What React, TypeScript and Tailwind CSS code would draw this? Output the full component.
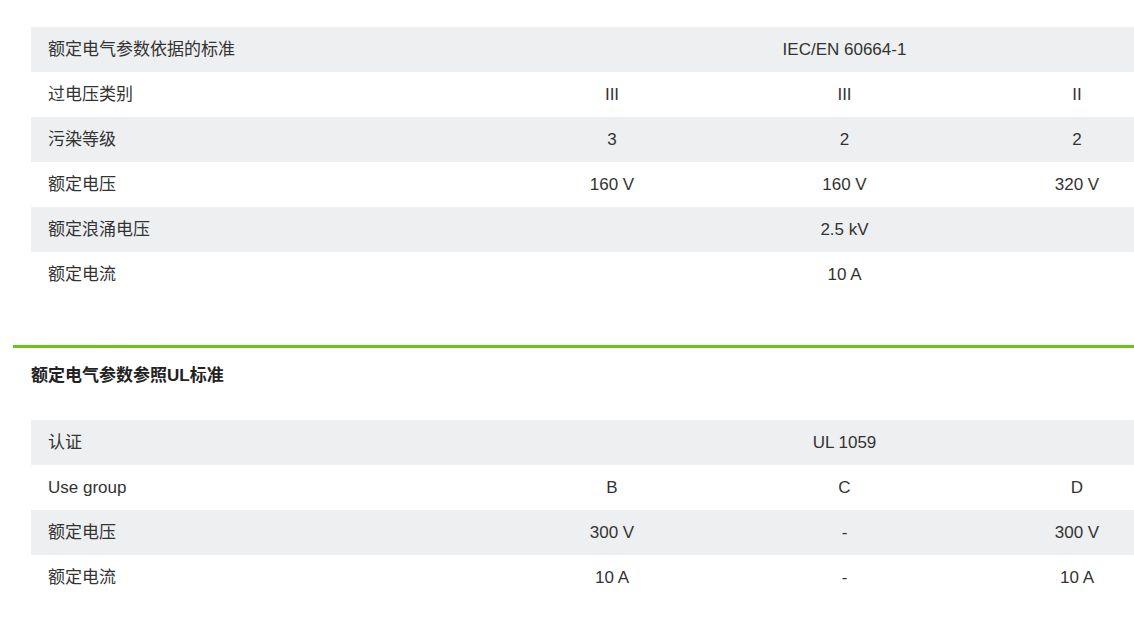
import React from "react";

type Row = { label: string; values: string[] };

const t1: Row[] = [
  { label: "额定电气参数依据的标准", values: ["IEC/EN 60664-1"] },
  { label: "过电压类别", values: ["III", "III", "II"] },
  { label: "污染等级", values: ["3", "2", "2"] },
  { label: "额定电压", values: ["160 V", "160 V", "320 V"] },
  { label: "额定浪涌电压", values: ["2.5 kV"] },
  { label: "额定电流", values: ["10 A"] },
];

const t2: Row[] = [
  { label: "认证", values: ["UL 1059"] },
  { label: "Use group", values: ["B", "C", "D"] },
  { label: "额定电压", values: ["300 V", "-", "300 V"] },
  { label: "额定电流", values: ["10 A", "-", "10 A"] },
];

function Table({ rows }: { rows: Row[] }) {
  return (
    <div className="ml-[31px] w-[1162px] flex flex-col">
      {rows.map((r, i) => (
        <div
          key={i}
          className={
            "grid grid-cols-[465px_232px_233px_232px] h-[45px] items-center " +
            (i % 2 === 0 ? "bg-[#eeeff1]" : "bg-white")
          }
        >
          <div className="pl-[17px]">{r.label}</div>
          {r.values.length === 1 ? (
            <div className="col-span-3 text-center">{r.values[0]}</div>
          ) : (
            r.values.map((v, j) => (
              <div key={j} className="text-center">
                {v}
              </div>
            ))
          )}
        </div>
      ))}
    </div>
  );
}

export default function App() {
  return (
    <div
      className="w-[1134px] h-[637px] overflow-hidden bg-white text-[17px] text-[#333333]"
      style={{ fontFamily: '"Liberation Sans", "Noto Sans CJK SC", sans-serif' }}
    >
      <div className="pt-[27px]">
        <Table rows={t1} />
      </div>
      <div className="mt-[48px] ml-[13px] w-[1200px] h-[3px] bg-[#6cc417]" />
      <div className="ml-[31px] mt-[15px] h-[25px] flex items-center font-bold text-[17px] text-[#222222]">
        额定电气参数参照UL标准
      </div>
      <div className="mt-[32px]">
        <Table rows={t2} />
      </div>
    </div>
  );
}
